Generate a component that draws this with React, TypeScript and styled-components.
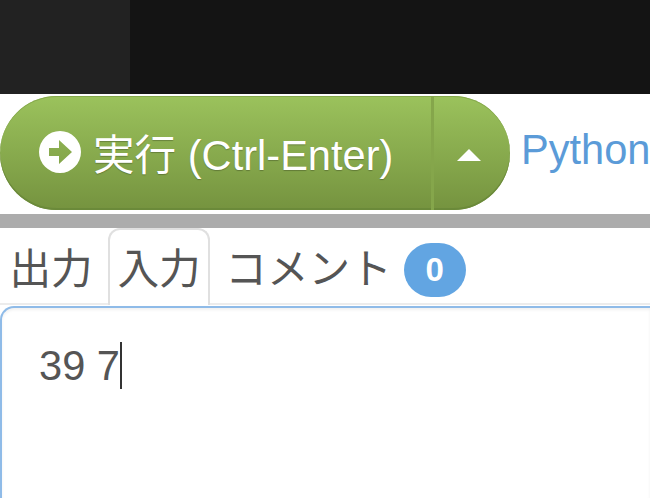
import styled, { createGlobalStyle } from "styled-components";

const GlobalStyle = createGlobalStyle`
    html, body {
        margin: 0;
        padding: 0;
        background: #fff;
    }
    body {
        font-family: "Liberation Sans", "Noto Sans CJK JP", sans-serif;
        color: #555;
        overflow: hidden;
    }
`

const App = () => {
    return (
        <Page>
            <GlobalStyle/>
            <TopBar>
                <BrandBlock/>
            </TopBar>
            <ActionRow>
                <RunGroup>
                    <RunButton>
                        <svg width="42" height="42" viewBox="0 0 42 42">
                            <path
                                fillRule="evenodd"
                                fill="#fff"
                                d="M21 0a21 21 0 1 0 0 42a21 21 0 1 0 0-42ZM10 17h10V9l13 12l-13 12v-8H10Z"
                            />
                        </svg>
                        <span>実行 (Ctrl-Enter)</span>
                    </RunButton>
                    <CaretButton>
                        <Caret/>
                    </CaretButton>
                </RunGroup>
                <Language>Python</Language>
            </ActionRow>
            <Divider/>
            <Tabs>
                <Tab>出力</Tab>
                <Tab $active>入力</Tab>
                <Tab>コメント<Badge>0</Badge></Tab>
            </Tabs>
            <InputBox>
                <InputText>39 7</InputText>
            </InputBox>
        </Page>
    );
};

export default App;

const Page = styled.div`
    width: 650px;
    height: 498px;
    overflow: hidden;
`
const TopBar = styled.div`
    height: 94px;
    background-color: #141414;
`
const BrandBlock = styled.div`
    width: 130px;
    height: 100%;
    background-color: #222;
`
const ActionRow = styled.div`
    display: flex;
    align-items: flex-start;
    height: 120px;
    padding-top: 2px;
    box-sizing: border-box;
    white-space: nowrap;
`
const RunGroup = styled.div`
    display: flex;
    width: 510px;
    height: 114px;
    border-radius: 57px;
    overflow: hidden;
    background: linear-gradient(to bottom, #9bc25c, #75933f);
    box-shadow: inset 0 -2px 0 #6b8a3a, inset 0 1px 0 #86a94c;
    flex-shrink: 0;
`
const RunButton = styled.div`
    display: flex;
    align-items: center;
    gap: 12px;
    width: 431px;
    box-sizing: border-box;
    padding: 0 0 2px 39px;
    color: #fff;
    font-size: 41.6px;
    text-shadow: 0 1px 1px rgba(0, 0, 0, 0.25);
`
const CaretButton = styled.div`
    flex: 1;
    display: flex;
    align-items: center;
    justify-content: center;
    padding-right: 6px;
    border-left: 3px solid #85a64b;
`
const Caret = styled.div`
    width: 0;
    height: 0;
    margin-top: 4px;
    border-left: 12px solid transparent;
    border-right: 12px solid transparent;
    border-bottom: 12px solid #fff;
`
const Language = styled.div`
    margin-left: 11px;
    margin-top: 30px;
    color: #5b9bd8;
    font-size: 41.6px;
`
const Divider = styled.div`
    height: 14px;
    background-color: #acacac;
`
const Tabs = styled.div`
    display: flex;
    gap: 6px;
    height: 77px;
    box-sizing: border-box;
    border-bottom: 2px solid #ececec;
`
const Tab = styled.div<{ $active?: boolean }>`
    display: flex;
    align-items: center;
    height: 77px;
    box-sizing: border-box;
    padding: 0 7.4px 3px;
    font-size: 41.6px;
    color: #555;
    white-space: nowrap;
    background: ${p => p.$active ? "#fff" : "transparent"};
    border: 2px solid ${p => p.$active ? "#e0e0e0" : "transparent"};
    border-bottom: 0;
    border-radius: 12px 12px 0 0;
`
const Badge = styled.span`
    display: inline-flex;
    align-items: center;
    justify-content: center;
    width: 62px;
    height: 54px;
    margin: 7px 0 0 12px;
    border-radius: 27px;
    background-color: #62a5e2;
    color: #fff;
    font-size: 33px;
    font-weight: bold;
`
const InputBox = styled.div`
    height: 192px;
    margin-top: 1px;
    padding: 31px 37px;
    box-sizing: border-box;
    border: 2px solid #8fbbe8;
    border-right: 0;
    border-bottom: 0;
    border-radius: 14px 0 0 0;
    box-shadow: inset 0 2px 3px rgba(0, 0, 0, 0.06);
    font-size: 41.6px;
    line-height: 54px;
    color: #555;
`
const InputText = styled.span`
    border-right: 2px solid #333;
`
